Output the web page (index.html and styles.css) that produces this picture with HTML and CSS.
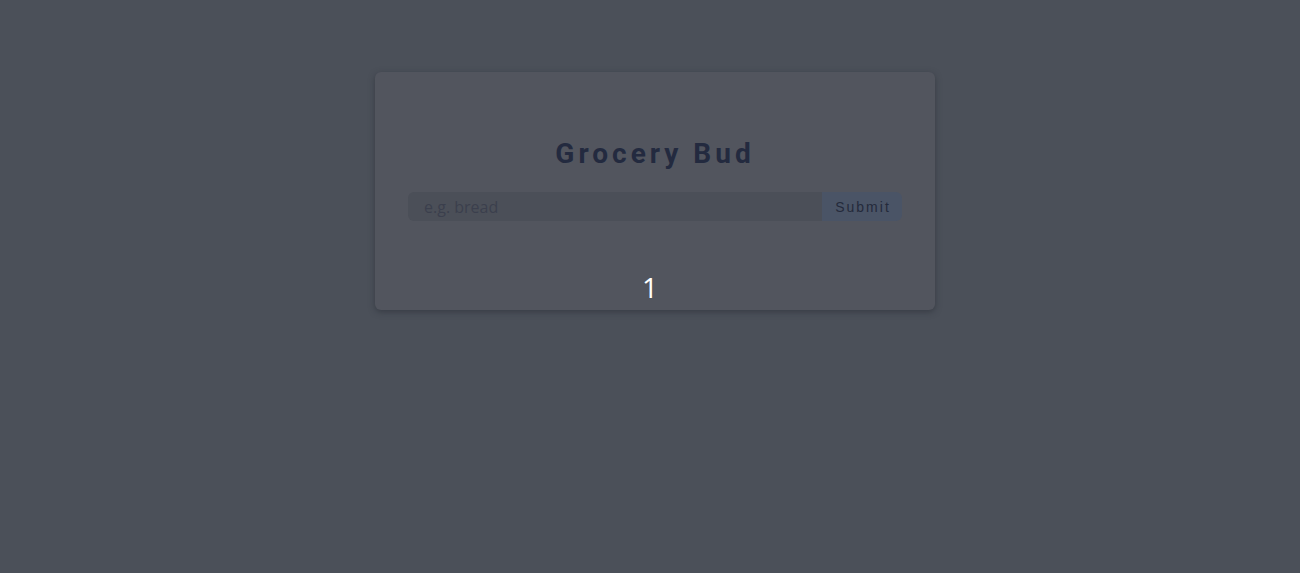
FILE: index.html
```html
<!DOCTYPE html>
<html lang="en">
<head>
<meta charset="utf-8">
<title>Grocery Bud</title>
<link rel="stylesheet" href="styles.css">
</head>
<body>
<main class="page">
  <section class="card">
    <form class="grocery-form">
      <h3 class="title">Grocery Bud</h3>
      <div class="form-control">
        <input type="text" class="grocery" placeholder="e.g. bread">
        <button type="button" class="submit-btn">Submit</button>
      </div>
    </form>
  </section>
</main>
<div class="counter">1</div>
</body>
</html>
```
FILE: styles.css
```css
* { box-sizing: border-box; margin: 0; padding: 0; }
html, body { height: 100%; }
body {
  background: #4b5059;
  font-family: "Open Sans", "Liberation Sans", sans-serif;
  overflow: hidden;
}
.page {
  display: flex;
  justify-content: center;
  padding-top: 72px;
  padding-left: 10px;
}
.card {
  width: 560px;
  height: 238px;
  background: #52555e;
  border-radius: 6px;
  padding: 64px 33px 32px 33px;
  box-shadow: 0 2px 6px rgba(40, 44, 52, 0.55);
}
.title {
  font-family: Roboto, "Liberation Sans", sans-serif;
  font-weight: 700;
  font-size: 28px;
  line-height: 1.25;
  letter-spacing: 4px;
  text-align: center;
  color: #232a3f;
  margin-bottom: 21px;
}
.form-control {
  display: flex;
  height: 29px;
}
.grocery {
  flex: 1;
  border: none;
  outline: none;
  background: #4b4f58;
  border-radius: 6px 0 0 6px;
  padding: 0 16px;
  font-family: "Open Sans", sans-serif;
  font-size: 16px;
  color: #393d4c;
}
.grocery::placeholder { color: #3b3f4d; }
.submit-btn {
  width: 80px;
  border: none;
  background: #4a5466;
  border-radius: 0 6px 6px 0;
  font-family: "Liberation Sans", Arial, sans-serif;
  font-size: 14px;
  letter-spacing: 2px;
  color: #242a3b;
  padding-left: 2px;
}
.counter {
  position: absolute;
  top: 268px;
  left: 0;
  right: 0;
  text-align: center;
  font-family: "Open Sans", sans-serif;
  font-size: 28px;
  line-height: 38px;
  color: #ffffff;
}
```
